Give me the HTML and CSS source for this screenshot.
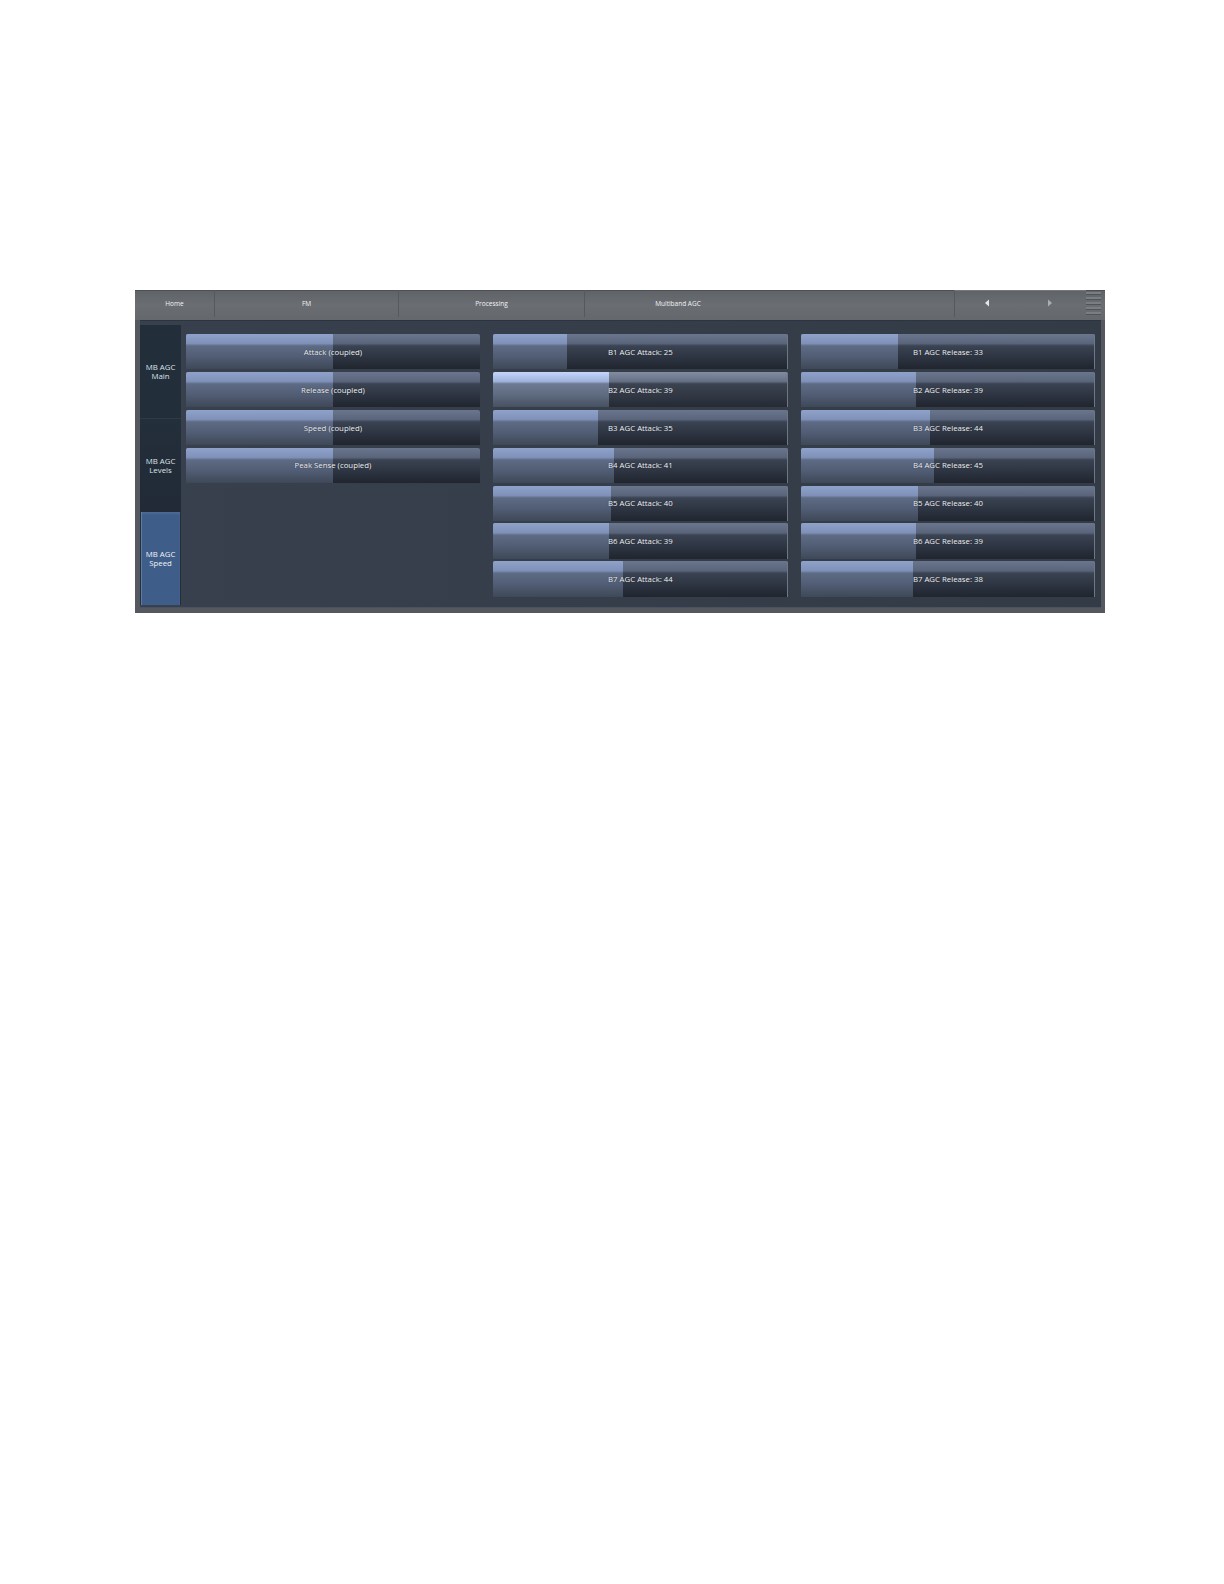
FILE: index.html
```html
<!DOCTYPE html>
<html lang="en">
<head>
<meta charset="utf-8">
<title>Multiband AGC</title>
<link rel="stylesheet" href="styles.css">
</head>
<body>
<main class="panel">
  <header class="topbar">
    <div class="crumb crumb-home">Home</div>
    <div class="crumb crumb-fm">FM</div>
    <div class="crumb crumb-proc">Processing</div>
    <div class="crumb crumb-plain">Multiband AGC</div>
    <div class="crumb crumb-blank"></div>
    <div class="arrows">
      <span class="arrow"><svg width="6" height="8" viewBox="0 0 6 8"><path d="M5 0.5V7.5L1 4Z" fill="#e4e6ea"/></svg></span>
      <span class="arrow"><svg width="6" height="8" viewBox="0 0 6 8"><path d="M1 0.5V7.5L5 4Z" fill="#a9adb4"/></svg></span>
    </div>
    <div class="grip"><i></i><i></i><i></i><i></i><i></i></div>
  </header>
  <div class="body">
    <nav class="tabs">
      <div class="tab tab-main">MB AGC<br>Main</div>
      <div class="tab tab-levels">MB AGC<br>Levels</div>
      <div class="tab tab-active">MB AGC<br>Speed</div>
    </nav>
    <section class="columns">
      <div class="col">
        <div class="btn"><div class="fill" style="width:50%"></div><span class="label">Attack (coupled)</span></div>
        <div class="btn"><div class="fill" style="width:50%"></div><span class="label">Release (coupled)</span></div>
        <div class="btn"><div class="fill" style="width:50%"></div><span class="label">Speed (coupled)</span></div>
        <div class="btn"><div class="fill" style="width:50%"></div><span class="label">Peak Sense (coupled)</span></div>
      </div>
      <div class="col">
        <div class="btn"><div class="fill" style="width:25%"></div><span class="label">B1 AGC Attack: 25</span></div>
        <div class="btn btn-focus"><div class="fill" style="width:39.3%"></div><span class="label">B2 AGC Attack: 39</span></div>
        <div class="btn"><div class="fill" style="width:35.5%"></div><span class="label">B3 AGC Attack: 35</span></div>
        <div class="btn"><div class="fill" style="width:41%"></div><span class="label">B4 AGC Attack: 41</span></div>
        <div class="btn"><div class="fill" style="width:40%"></div><span class="label">B5 AGC Attack: 40</span></div>
        <div class="btn"><div class="fill" style="width:39.3%"></div><span class="label">B6 AGC Attack: 39</span></div>
        <div class="btn"><div class="fill" style="width:44%"></div><span class="label">B7 AGC Attack: 44</span></div>
      </div>
      <div class="col">
        <div class="btn"><div class="fill" style="width:33.2%"></div><span class="label">B1 AGC Release: 33</span></div>
        <div class="btn"><div class="fill" style="width:39.3%"></div><span class="label">B2 AGC Release: 39</span></div>
        <div class="btn"><div class="fill" style="width:44%"></div><span class="label">B3 AGC Release: 44</span></div>
        <div class="btn"><div class="fill" style="width:45.2%"></div><span class="label">B4 AGC Release: 45</span></div>
        <div class="btn"><div class="fill" style="width:40%"></div><span class="label">B5 AGC Release: 40</span></div>
        <div class="btn"><div class="fill" style="width:39.3%"></div><span class="label">B6 AGC Release: 39</span></div>
        <div class="btn"><div class="fill" style="width:38.3%"></div><span class="label">B7 AGC Release: 38</span></div>
      </div>
    </section>
  </div>
</main>
</body>
</html>
```

FILE: styles.css
```css
* { box-sizing: border-box; }
html, body { margin: 0; background: #fff; }
body {
  width: 1224px;
  height: 1584px;
  padding: 290px 0 0 135px;
  font-family: "Open Sans", "Liberation Sans", sans-serif;
  font-size: 7.8px;
  color: #f2f4f7;
}
.panel {
  width: 970px;
  height: 323px;
  display: flex;
  flex-direction: column;
}
.topbar {
  height: 30px;
  display: flex;
  flex: none;
  background: linear-gradient(180deg, #5f6266 0%, #6a6d71 50%, #64676b 100%);
  box-shadow: inset 0 1px 0 #4c4f54;
}
.crumb {
  display: flex;
  align-items: center;
  justify-content: center;
  margin-bottom: 3px;
  font-size: 6.5px;
  border-right: 1px solid #55585d;
}
.crumb-home { width: 80px; }
.crumb-fm { width: 184px; }
.crumb-proc { width: 186px; }
.crumb-plain { width: 186px; border-right: 0; }
.crumb-blank { width: 183px; border-right: 0; }
.arrows {
  width: 132px;
  display: flex;
  padding-right: 4px;
  margin-bottom: 3px;
  border-left: 1px solid #55585d;
  border-top: 1px solid #73767a;
}
.arrow {
  flex: 1;
  display: flex;
  align-items: center;
  justify-content: center;
  padding-bottom: 2px;
}
.grip {
  width: 15px;
  display: flex;
  flex-direction: column;
  justify-content: space-between;
  padding: 2px 0 5px;
}
.grip i { display: block; height: 3px; background: #7a7d81; border-bottom: 1px solid #505357; }
.body {
  flex: 1;
  display: flex;
  min-height: 0;
  padding-top: 4.7px;
  background: linear-gradient(90deg, #37404c, #333b47);
  border-style: solid;
  border-color: #55585f;
  border-width: 0 4px 5px 5px;
  box-shadow: inset 0 1px 0 #2b3440, inset 0 -1px 0 #4a5160;
}
.tabs {
  width: 41px;
  height: 280.3px;
  flex: none;
  display: flex;
  flex-direction: column;
  background: #232e3b;
}
.tab {
  display: flex;
  align-items: center;
  justify-content: center;
  padding-top: 1px;
  text-align: center;
  line-height: 9px;
  color: #dfe3e8;
}
.tab-main { height: 94px; border-bottom: 1px solid #2e3a48; }
.tab-levels { height: 93px; background: linear-gradient(180deg, #242f3c, #212a36); }
.tab-active {
  flex: 1;
  margin: 0 1px;
  color: #f2f4f7;
  background: #3f5d89;
  box-shadow: inset 1px 0 0 #5f7ba4, inset 0 2px 2px #4d6a95;
}
.columns {
  flex: 1;
  display: flex;
  gap: 13px;
  padding: 9.3px 0 0 4.7px;
}
.col {
  width: 294.5px;
  flex: none;
  display: flex;
  flex-direction: column;
  gap: 2.4px;
}
.btn {
  position: relative;
  height: 35.5px;
  flex: none;
  display: flex;
  align-items: center;
  justify-content: center;
  border-radius: 2px 2px 0 0;
  overflow: hidden;
  background: linear-gradient(180deg, #6a768d 0%, #5a657c 27%, #3a4352 34%, #2c3340 70%, #20252e 100%);
}
.col + .col .btn { box-shadow: inset -1px 0 0 #6f7684; }
.fill {
  position: absolute;
  top: 0;
  bottom: 0;
  left: 0;
  background: linear-gradient(180deg, #8fa2c9 0%, #7f91b8 27%, #5e6b84 34%, #515d74 65%, #3e4858 100%);
}
.btn-focus { background: linear-gradient(180deg, #838da2 0%, #667085 27%, #3b4350 34%, #303743 70%, #252a34 100%); }
.btn-focus .fill { background: linear-gradient(180deg, #c4d6fb 0%, #9fb2dc 27%, #6e7a93 34%, #5f6b80 65%, #465161 100%); }
.label {
  position: relative;
  white-space: nowrap;
  text-shadow: 0 0 1px #1a1f27;
}
```
